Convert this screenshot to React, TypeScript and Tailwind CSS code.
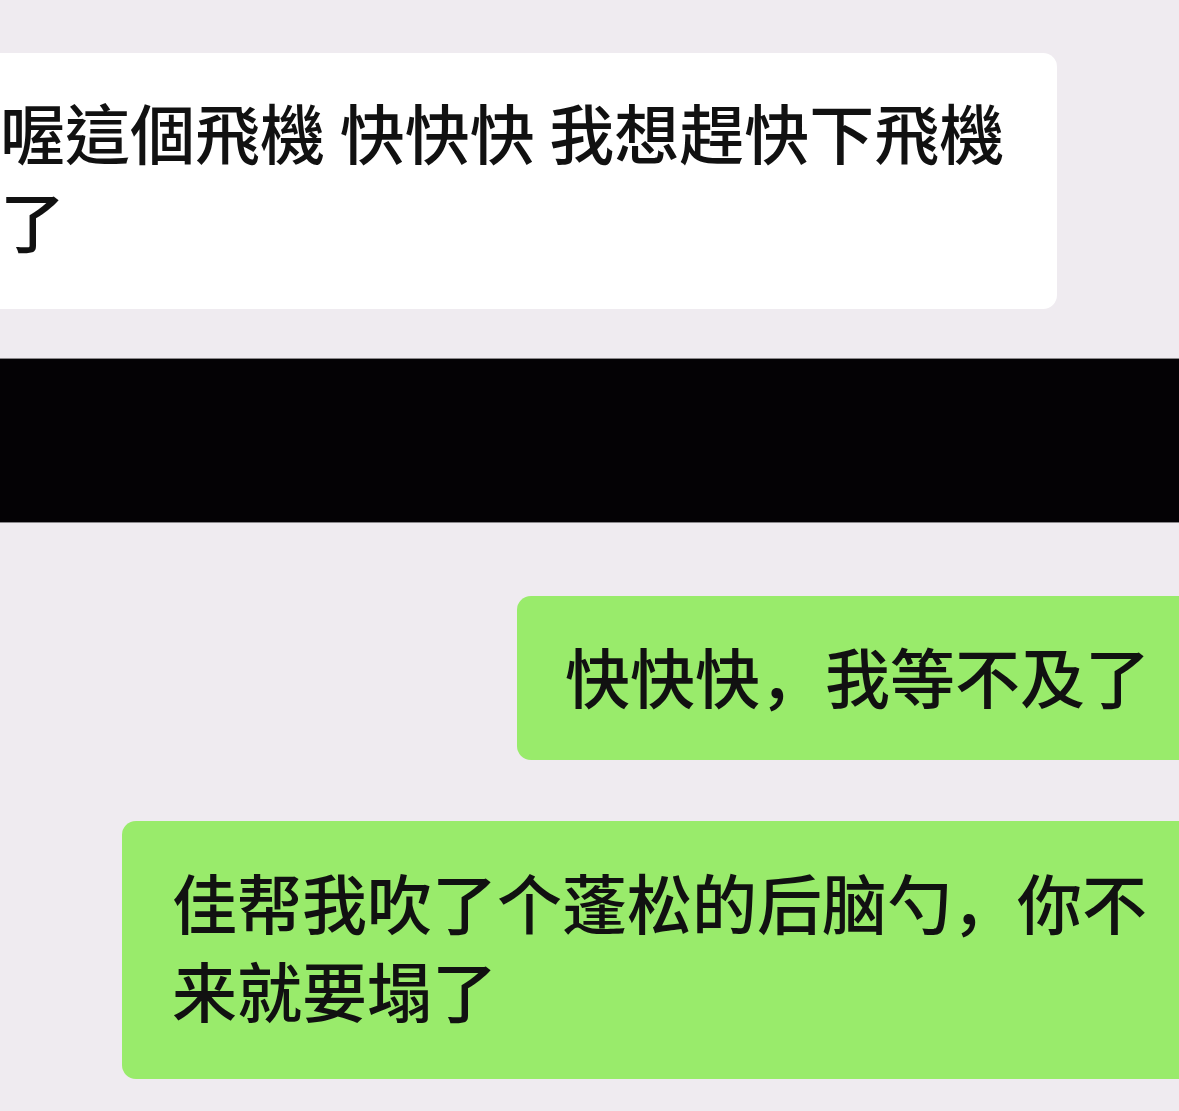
import React from 'react';

const tc = "font-['Noto_Sans_CJK_TC','Noto_Sans_CJK_SC',sans-serif]";
const sc = "font-['Noto_Sans_CJK_SC','Noto_Sans_CJK_TC',sans-serif]";

export default function App() {
  return (
    <div className="w-[1179px] h-[1111px] overflow-hidden bg-[#efebf0] text-[#111] flex flex-col">
      {/* incoming message, its left edge runs off screen */}
      <div className="mt-[53px] -ml-[48px] w-[1105px] rounded-[14px] bg-white pl-[48px] pr-[30px] pt-[34px] pb-[46px]">
        <p className={`${tc} font-medium text-[65px] leading-[88px]`}>喔這個飛機 快快快 我想趕快下飛機了</p>
      </div>

      {/* redacted strip */}
      <div className="mt-[49px] h-[165px] shrink-0 bg-[#040205] border-y border-[#8a888b]" />

      {/* outgoing messages */}
      <div className="mt-[73px] ml-[517px] w-[720px] rounded-l-[14px] bg-[#99eb6b] pl-[48px] pt-[35px] pb-[41px]">
        <p className={`${sc} font-medium text-[65px] leading-[88px] whitespace-nowrap`}>快快快，我等不及了</p>
      </div>

      <div className="mt-[61px] ml-[122px] w-[1100px] rounded-l-[14px] bg-[#99eb6b] pl-[50px] pt-[36px] pb-[46px]">
        <p className={`${sc} font-medium w-[1000px] text-[65px] leading-[88px]`}>佳帮我吹了个蓬松的后脑勺，你不来就要塌了</p>
      </div>
    </div>
  );
}
